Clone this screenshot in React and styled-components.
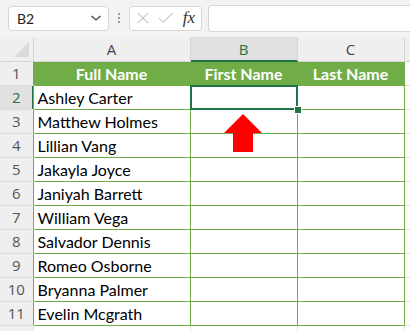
import React from "react";
import styled, {createGlobalStyle, css} from "styled-components";

const GREEN = "#70ad47";
const DARK = "#217346";
const GRID = "#e1e1e1";

const GlobalStyle = createGlobalStyle`
    html, body {
        margin: 0;
        background: #f3f3f3;
    }
    body {
        font-family: "Lato", "Open Sans", sans-serif;
    }
`;

const Window = styled.div`
    width: 410px;
    height: 331px;
    overflow: hidden;
    background: #f3f3f3;
`;

const FormulaBar = styled.div`
    display: flex;
    align-items: center;
    height: 37px;
    padding: 0 0 1px 8px;
    box-sizing: border-box;
`;

const NameBox = styled.div`
    display: flex;
    align-items: center;
    justify-content: space-between;
    width: 101px;
    height: 25px;
    box-sizing: border-box;
    padding: 0 6px 0 8px;
    background: #fff;
    border: 1px solid #d6d6d6;
    border-radius: 4px;
    font-size: 14px;
    color: #222;
`;

const Dots = styled.div`
    display: flex;
    flex-direction: column;
    gap: 2px;
    margin: 0 9px;

    span {
        width: 2px;
        height: 2px;
        background: #9a9a9a;
    }
`;

const IconBox = styled.div`
    display: flex;
    align-items: center;
    gap: 8px;
    width: 73px;
    height: 25px;
    box-sizing: border-box;
    padding: 0 6px;
    background: #fff;
    border: 1px solid #d6d6d6;
    border-radius: 4px;
`;

const Fx = styled.span`
    font-family: "Liberation Serif", serif;
    font-style: italic;
    font-size: 17px;
    color: #333;
    margin-left: 1px;
`;

const FormulaInput = styled.div`
    flex: 1;
    height: 25px;
    margin-left: 6px;
    background: #fff;
    border: 1px solid #d6d6d6;
    border-right: none;
    border-radius: 4px 0 0 4px;
`;

const SheetWrap = styled.div`
    position: relative;
`;

const Sheet = styled.table`
    border-collapse: collapse;
    table-layout: fixed;
    width: 440px;
    background: #fff;

    tr {
        height: 24px;
    }
`;

const ColHead = styled.th`
    padding: 0;
    font-weight: 400;
    text-align: center;
    background: ${({$active}) => ($active ? "#e1e1e1" : "#efefef")};
    border-right: 1px solid #d4d4d4;
    border-bottom: 1px solid ${({$active}) => ($active ? DARK : "#d4d4d4")};
    box-shadow: ${({$active}) => ($active ? `inset 0 -1px 0 ${DARK}` : "none")};
    color: ${({$active}) => ($active ? DARK : "#444")};
    font-family: "Open Sans", sans-serif;
    font-size: 15px;
`;

const Corner = styled(ColHead)`
    position: relative;

    &::after {
        content: "";
        position: absolute;
        right: 4px;
        bottom: 4px;
        border-left: 15px solid transparent;
        border-bottom: 15px solid #dadada;
    }
`;

const RowHead = styled.th`
    padding: 0;
    font-weight: 400;
    text-align: center;
    background: ${({$active}) => ($active ? "#e1e1e1" : "#efefef")};
    border-bottom: 1px solid #dcdcdc;
    border-right: none;
    box-shadow: ${({$active}) => ($active ? `inset -1px 0 0 ${DARK}` : "none")};
    color: ${({$active}) => ($active ? DARK : "#555")};
    font-family: "Open Sans", sans-serif;
    font-size: 15px;
`;

const Cell = styled.td`
    padding: 0 0 0 4px;
    font-size: 16px;
    color: #000;
    white-space: nowrap;
    overflow: hidden;
    border: 1px solid ${({$plain}) => ($plain ? GRID : GREEN)};

    ${({$head}) => $head && css`
        padding: 0;
        text-align: center;
        background: ${GREEN};
        color: #fff;
        font-weight: 700;
    `}

    ${({$selected}) => $selected && css`
        position: relative;
        overflow: visible;

        &::before {
            content: "";
            position: absolute;
            inset: -1px;
            border: 2px solid ${DARK};
        }

        &::after {
            content: "";
            position: absolute;
            right: -4px;
            bottom: -4px;
            width: 6px;
            height: 6px;
            background: ${DARK};
            box-shadow: 0 0 0 1px #fff;
        }
    `}
`;

const Arrow = styled.svg`
    position: absolute;
    left: 224px;
    top: 77px;
`;

const names = [
    "Ashley Carter",
    "Matthew Holmes",
    "Lillian Vang",
    "Jakayla Joyce",
    "Janiyah Barrett",
    "William Vega",
    "Salvador Dennis",
    "Romeo Osborne",
    "Bryanna Palmer",
    "Evelin Mcgrath"
];

function Chevron() {
    return (
        <svg width="12" height="8" viewBox="0 0 12 8">
            <path d="M1.5 2 L6 6 L10.5 2" fill="none" stroke="#444" strokeWidth="1.3" />
        </svg>
    );
}

function Cross() {
    return (
        <svg width="16" height="16" viewBox="0 0 16 16">
            <path d="M2 2 L14 14 M14 2 L2 14" stroke="#c4c4c4" strokeWidth="1.2" />
        </svg>
    );
}

function Check() {
    return (
        <svg width="18" height="16" viewBox="0 0 18 16">
            <path d="M1 8 L6 13 L17 2" fill="none" stroke="#c4c4c4" strokeWidth="1.2" />
        </svg>
    );
}

export default function App() {
    return (
        <Window>
            <GlobalStyle />
            <FormulaBar>
                <NameBox>
                    <span>B2</span>
                    <Chevron />
                </NameBox>
                <Dots><span /><span /><span /></Dots>
                <IconBox>
                    <Cross />
                    <Check />
                    <Fx>fx</Fx>
                </IconBox>
                <FormulaInput />
            </FormulaBar>
            <SheetWrap>
                <Sheet>
                    <colgroup>
                        <col style={{width: 33}} />
                        <col style={{width: 157}} />
                        <col style={{width: 107}} />
                        <col style={{width: 107}} />
                        <col />
                    </colgroup>
                    <thead>
                        <tr>
                            <Corner />
                            <ColHead>A</ColHead>
                            <ColHead $active>B</ColHead>
                            <ColHead>C</ColHead>
                            <ColHead />
                        </tr>
                    </thead>
                    <tbody>
                        <tr>
                            <RowHead>1</RowHead>
                            <Cell $head>Full Name</Cell>
                            <Cell $head>First Name</Cell>
                            <Cell $head>Last Name</Cell>
                            <Cell $plain />
                        </tr>
                        {names.map((name, idx) => (
                            <tr key={name}>
                                <RowHead $active={idx === 0}>{idx + 2}</RowHead>
                                <Cell>{name}</Cell>
                                <Cell $selected={idx === 0} />
                                <Cell />
                                <Cell $plain />
                            </tr>
                        ))}
                        <tr>
                            <RowHead />
                            <Cell $plain />
                            <Cell $plain />
                            <Cell $plain />
                            <Cell $plain />
                        </tr>
                    </tbody>
                </Sheet>
                <Arrow width="38" height="38" viewBox="0 0 38 38">
                    <polygon points="19,0 38,19 29,19 29,38 9,38 9,19 0,19" fill="#ff0000" />
                </Arrow>
            </SheetWrap>
        </Window>
    );
}
